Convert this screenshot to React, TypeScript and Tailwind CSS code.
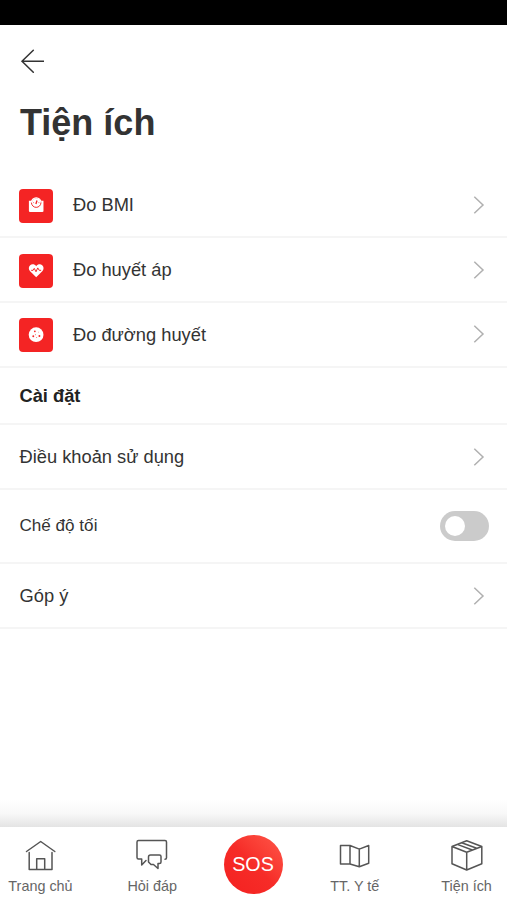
import type { ReactNode } from "react";

function Chevron() {
  return (
    <svg className="mr-[22px] h-5 w-3" viewBox="0 0 12 20" fill="none" stroke="#b0b0b0" strokeWidth="1.5">
      <path d="M1.3 1.7 10 10 1.3 18.3" />
    </svg>
  );
}

function ScaleIcon() {
  return (
    <svg className="h-[34px] w-[34px]" viewBox="0 0 35 35">
      <path fill="#fff" d="M10.2 12.2h15v10.4q0 1.2-1.2 1.2H11.4q-1.2 0-1.2-1.2z" />
      <circle cx="17.7" cy="14" r="4.9" fill="#fff" stroke="#f42424" strokeWidth="1" />
      <path d="M12.8 14a4.9 4.9 0 0 1 9.800 0" fill="none" stroke="#fff" strokeWidth="1.3" />
      <path d="m17.4 15.500 1.100-3.600" stroke="#f42424" strokeWidth="1.4" />
      <path d="M14.600 14h.9M20 14h.9" stroke="#f42424" strokeWidth=".7" />
    </svg>
  );
}

function HeartIcon() {
  return (
    <svg className="h-[34px] w-[34px]" viewBox="0 0 35 35">
      <path
        fill="#fff"
        d="M17.7 24 11.2 17.6C9.6 15.7 9.8 13 11.5 11.6c1.9-1.6 4.7-1.1 6.2 1 1.5-2.1 4.3-2.6 6.2-1 1.7 1.4 1.9 4.1.3 6z"
      />
      <path d="M12.500 16.8h2l1.200-2 1.800 3.500 1.800-4 1.500 2.500h2" fill="none" stroke="#f42424" strokeWidth="1" />
    </svg>
  );
}

function GlucoseIcon() {
  return (
    <svg className="h-[34px] w-[34px]" viewBox="0 0 35 35">
      <circle cx="17.6" cy="17.2" r="7.6" fill="#fff" />
      <g fill="#f42424">
        <circle cx="16.3" cy="13.7" r=".9" />
        <circle cx="14.7" cy="18.7" r="1" />
        <circle cx="17" cy="17.2" r=".5" />
        <circle cx="21" cy="18.5" r="1" />
        <circle cx="18.2" cy="20.1" r=".5" />
        <circle cx="20.1" cy="14.5" r=".4" />
      </g>
    </svg>
  );
}

function Tool({ icon, label }: { icon: ReactNode; label: string }) {
  return (
    <div className="flex h-[64.7px] items-center border-b-2 border-[#f5f5f5] pl-[19px]">
      <div className="mt-[2px] h-[34px] w-[34px] rounded-[4px] bg-[#f42424]">{icon}</div>
      <span className="ml-[20px] flex-1 text-[18.3px]">{label}</span>
      <Chevron />
    </div>
  );
}

function NavItem({ icon, label, width }: { icon: ReactNode; label: string; width: string }) {
  return (
    <div className={`flex flex-col items-center pt-[10px] ${width}`}>
      <svg className="h-[36px] w-[36px]" viewBox="0.500 0 36 36" fill="none" stroke="#555" strokeWidth="1.5" strokeLinejoin="round" strokeLinecap="round">
        {icon}
      </svg>
      <span className="mt-[3px] text-[14.4px] leading-[20px] whitespace-nowrap text-[#666]">{label}</span>
    </div>
  );
}

export default function App() {
  return (
    <div className="flex h-[900px] w-[507px] flex-col overflow-hidden bg-white font-['Liberation_Sans',Arial,sans-serif] text-[#333]">
      <div className="h-[25px] shrink-0 bg-black" />
      <header className="h-[148.500px] shrink-0 pt-[24px] pl-[20px]">
        <svg className="h-6 w-6" viewBox="0 0 24 24" fill="none" stroke="#333" strokeWidth="1.5" strokeLinecap="round">
          <path d="M24 12.2H2M13.3 1.2 2 12.2l11.3 11" />
        </svg>
        <h1 className="mt-[29px] text-[36px] leading-[42px] font-bold">Tiện ích</h1>
      </header>
      <main className="flex-1">
        <Tool icon={<ScaleIcon />} label="Đo BMI" />
        <Tool icon={<HeartIcon />} label="Đo huyết áp" />
        <Tool icon={<GlucoseIcon />} label="Đo đường huyết" />
        <h2 className="flex h-[57.500px] items-center border-b-2 border-[#f5f5f5] pl-[19.5px] text-[18.3px] font-bold text-[#222]">Cài đặt</h2>
        <div className="flex h-[65px] items-center justify-between border-b-2 border-[#f5f5f5] pl-[19.5px] text-[18.3px]">
          Điều khoản sử dụng
          <Chevron />
        </div>
        <div className="flex h-[74px] items-center justify-between border-b-2 border-[#f5f5f5] pr-[18px] pl-[19.5px] text-[17.1px]">
          Chế độ tối
          <div className="flex h-[30px] w-[49px] items-center rounded-full bg-[#cbcbcb] pl-[5px]">
            <div className="h-5 w-5 rounded-full bg-white" />
          </div>
        </div>
        <div className="flex h-[65px] items-center justify-between border-b-2 border-[#f5f5f5] pl-[19.5px] text-[18.3px]">
          Góp ý
          <Chevron />
        </div>
      </main>
      <div className="h-[27px] shrink-0 bg-linear-to-b from-white via-[#f8f8f8] to-[#e4e4e4]" />
      <nav className="flex h-[73px] shrink-0 justify-between bg-white">
        <NavItem
          width="w-[81px]"
          label="Trang chủ"
          icon={<path d="M4 14.5 18.2 4.5 32.3 14.5M6.7 15.5v17.1h22.8V15.5M14.2 32.6V21.7h8v10.9" />}
        />
        <NavItem
          width="w-[142px]"
          label="Hỏi đáp"
          icon={
            <>
              <path d="M12.5 23.500 8.200 28v-6H5q-1.500 0-1.500-1.500V5q0-1.500 1.500-1.500h26.500Q33 3.500 33 5v15.700q0 1.500-1.500 1.500" />
              <path d="M17 18h9q1.500 0 1.500 1.500v5.500q0 1.500-1.500 1.500h-1.500v5L20 27.500h-2.500L15 25v-5Q15 18 17 18Z" />
            </>
          }
        />
        <div className="w-[60px] pt-[8px]">
          <div className="flex h-[59px] w-[59px] items-center justify-center rounded-full bg-linear-to-bl from-[#ff5548] via-[#f62c28] via-50% to-[#f42020] text-[19.7px] text-white">
            SOS
          </div>
        </div>
        <NavItem
          width="w-[142px]"
          label="TT. Y tế"
          icon={<path d="M4 8.500 13.500 8.500 22.800 12.100 32.200 8.500V26.300L22.800 29.700 13.500 27H4ZM13.500 8.500V27M22.800 12.100V29.700" />}
        />
        <NavItem
          width="w-[81px]"
          label="Tiện ích"
          icon={<path d="M18.200 3.700 33.300 9.500V26.800L18.200 33 3.500 26.800V9.500ZM3.500 9.500 18.200 15.200 33.300 9.500M18.200 15.200V33M8.800 7.400 23.800 13M13.200 5.700 28.200 11.300" />}
        />
      </nav>
    </div>
  );
}
